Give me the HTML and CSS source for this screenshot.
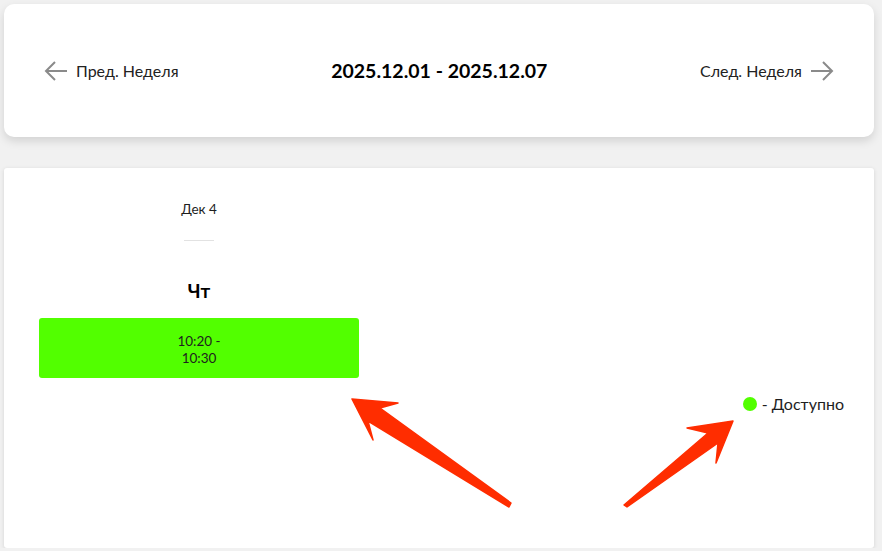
FILE: index.html
```html
<!DOCTYPE html>
<html lang="ru">
<head>
  <meta charset="UTF-8">
  <meta name="viewport" content="width=device-width, initial-scale=1.0">
  <title>Расписание</title>
  <link rel="stylesheet" href="styles.css">
</head>
<body>
  <div class="week-nav">
    <a class="nav-link" href="#">
      <svg class="nav-arrow" width="24" height="20" viewBox="0 0 24 20">
        <path d="M23 10H2M11 1L2 10l9 9" fill="none" stroke="#8a8a8a" stroke-width="2"/>
      </svg>
      <span>Пред. Неделя</span>
    </a>
    <h2 class="week-title">2025.12.01 - 2025.12.07</h2>
    <a class="nav-link" href="#">
      <span>След. Неделя</span>
      <svg class="nav-arrow" width="24" height="20" viewBox="0 0 24 20">
        <path d="M1 10h21M13 1l9 9-9 9" fill="none" stroke="#8a8a8a" stroke-width="2"/>
      </svg>
    </a>
  </div>

  <div class="schedule">
    <div class="days">
      <div class="day">
        <div class="day-date">Дек 4</div>
        <div class="day-divider"></div>
        <div class="day-name">Чт</div>
        <div class="slot">10:20 -<br>10:30</div>
      </div>
    </div>
    <div class="legend">
      <span class="legend-dot"></span>
      <span>- Доступно</span>
    </div>
  </div>

  <!-- annotation arrows drawn over the screenshot -->
  <svg class="annotations" width="882" height="551" viewBox="0 0 882 551">
    <polygon points="352,399 398,403 380,408 511,503 509,507 368,421 373,440" fill="#ff2d00" stroke="#ff2d00" stroke-width="1.5" stroke-linejoin="round"/>
    <polygon points="733,421 716,463 718,443 627,507 624,505 708,433 687,428" fill="#ff2d00" stroke="#ff2d00" stroke-width="1.5" stroke-linejoin="round"/>
  </svg>
</body>
</html>
```

FILE: styles.css
```css
body {
  margin: 0;
  padding: 4px 8px 0 4px;
  background-color: #f1f1f1;
  font-family: 'Lato', 'Noto Sans', sans-serif;
  color: #1e1e1e;
}

.week-nav {
  height: 133px;
  display: flex;
  align-items: center;
  justify-content: space-between;
  padding: 0 40px;
  background-color: #fff;
  border-radius: 10px;
  box-shadow: 0 4px 10px rgba(0, 0, 0, 0.13);
}

.nav-link {
  display: flex;
  align-items: center;
  gap: 8px;
  color: #222;
  text-decoration: none;
  font-size: 16px;
}

.week-title {
  margin: 0;
  font-size: 19.5px;
  font-weight: 700;
  color: #000;
}

.schedule {
  margin-top: 31px;
  min-height: 380px;
  box-sizing: border-box;
  padding: 33px 30px 0 35px;
  background-color: #fff;
  border-radius: 3px;
  box-shadow: 0 1px 4px rgba(0, 0, 0, 0.12);
}

.days {
  display: flex;
}

.day {
  width: 320px;
  text-align: center;
}

.day-date {
  font-size: 13.5px;
  line-height: 16px;
}

.day-divider {
  width: 30px;
  height: 1px;
  margin: 23px auto 0;
  background-color: #e2e2e2;
}

.day-name {
  margin-top: 38px;
  font-size: 19px;
  line-height: 24px;
  font-weight: 700;
  color: #000;
}

.slot {
  margin-top: 15px;
  height: 60px;
  box-sizing: border-box;
  padding-top: 3px;
  display: flex;
  align-items: center;
  justify-content: center;
  background-color: #52ff00;
  border-radius: 3px;
  font-size: 13.5px;
  line-height: 17px;
}

.legend {
  display: flex;
  justify-content: flex-end;
  align-items: center;
  gap: 5px;
  margin-top: 16px;
  font-size: 16px;
}

.legend-dot {
  width: 14px;
  height: 14px;
  border-radius: 50%;
  background-color: #52ff00;
}

.annotations {
  position: absolute;
  top: 0;
  left: 0;
  pointer-events: none;
}
```
